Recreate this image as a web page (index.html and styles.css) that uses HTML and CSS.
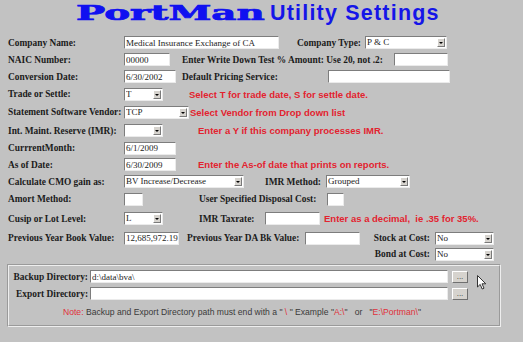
FILE: index.html
```html
<!DOCTYPE html>
<html lang="en">
<head>
    <meta charset="UTF-8">
    <title>PortMan Utility Settings</title>
    <link rel="stylesheet" href="styles.css">
</head>
<body>
    <div class="page">
        <h1 class="title">
            <span class="brand"><span class="brand-text">PortMan</span></span>
            <span class="title-rest">Utility Settings</span>
        </h1>

        <form class="settings">
            <div class="row">
                <label class="label">Company Name:</label>
                <input class="field company-name" value="Medical Insurance Exchange of CA">
                <label class="inline-label company-type-label">Company Type:</label>
                <span class="dropdown company-type"><select><option>P &amp; C</option></select></span>
            </div>
            <div class="row">
                <label class="label">NAIC Number:</label>
                <input class="field naic" value="00000">
                <label class="inline-label writedown-label">Enter Write Down Test % Amount: Use 20, not .2:</label>
                <input class="field writedown" value="">
            </div>
            <div class="row">
                <label class="label">Conversion Date:</label>
                <input class="field date" value="6/30/2002">
                <label class="inline-label pricing-label">Default Pricing Service:</label>
                <input class="field pricing" value="">
            </div>
            <div class="row row-18">
                <label class="label">Trade or Settle:</label>
                <span class="dropdown short"><select><option>T</option></select></span>
                <span class="hint hint-trade">Select T for trade date, S for settle date.</span>
            </div>
            <div class="row row-18">
                <label class="label">Statement Software Vendor:</label>
                <span class="dropdown vendor"><select><option>TCP</option></select></span>
                <span class="hint hint-vendor">Select Vendor from Drop down list</span>
            </div>
            <div class="row row-19">
                <label class="label">Int. Maint. Reserve (IMR):</label>
                <span class="dropdown short"><select><option></option></select></span>
                <span class="hint hint-imr">Enter a Y if this company processes IMR.</span>
            </div>
            <div class="row row-16">
                <label class="label">CurrrentMonth:</label>
                <input class="field date" value="6/1/2009">
            </div>
            <div class="row">
                <label class="label">As of Date:</label>
                <input class="field date" value="6/30/2009">
                <span class="hint hint-asof">Enter the As-of date that prints on reports.</span>
            </div>
            <div class="row">
                <label class="label">Calculate CMO gain as:</label>
                <span class="dropdown cmo"><select><option>BV Increase/Decrease</option></select></span>
                <label class="inline-label imr-method-label">IMR Method:</label>
                <span class="dropdown imr-method"><select><option>Grouped</option></select></span>
            </div>
            <div class="row row-18">
                <label class="label">Amort Method:</label>
                <input class="field tiny" value="">
                <label class="inline-label disposal-label">User Specified Disposal Cost:</label>
                <input class="field disposal" value="">
            </div>
            <div class="row row-21">
                <label class="label">Cusip or Lot Level:</label>
                <span class="dropdown short"><select><option>L</option></select></span>
                <label class="inline-label taxrate-label">IMR Taxrate:</label>
                <input class="field taxrate" value="">
                <span class="hint hint-taxrate">Enter as a decimal,&nbsp; ie .35 for 35%.</span>
            </div>
            <div class="row row-18">
                <label class="label">Previous Year Book Value:</label>
                <input class="field book-value" value="12,685,972.19">
                <label class="inline-label da-label">Previous Year DA Bk Value:</label>
                <input class="field da-value" value="">
                <label class="cost-label">Stock at Cost:</label>
                <span class="dropdown cost"><select><option>No</option></select></span>
            </div>
            <div class="row row-14 cost-row">
                <label class="cost-label">Bond at Cost:</label>
                <span class="dropdown cost"><select><option>No</option></select></span>
            </div>

            <div class="dir-box">
                <div class="dir-row">
                    <label class="dir-label">Backup Directory:</label>
                    <input class="field dir-field" value="d:\data\bva\">
                    <button type="button" class="browse">...</button>
                </div>
                <div class="dir-row">
                    <label class="dir-label">Export Directory:</label>
                    <input class="field dir-field" value="">
                    <button type="button" class="browse">...</button>
                </div>
                <p class="note"><span class="red">Note:</span> Backup and Export Directory path must end with a "<span class="red"> \ </span>" Example "<span class="red">A:\</span>"&nbsp;&nbsp; or &nbsp;&nbsp;"<span class="red">E:\Portman\</span>"</p>
            </div>
        </form>

        <!-- mouse pointer left on the screen -->
        <svg class="pointer" width="10" height="15" viewBox="0 0 10 15">
            <path d="M0.5 0.5 L0.5 12 L3.2 9.4 L5.2 14 L7 13.2 L5 8.8 L8.8 8.8 Z" fill="#fff" stroke="#333" stroke-width="1"/>
        </svg>
    </div>
</body>
</html>
```

FILE: styles.css
```css
body {
    margin: 0;
    background: #c2c2c2;
    font-family: "Liberation Serif", "Times New Roman", serif;
    color: #1b1b1b;
}

.page {
    position: relative;
    width: 523px;
    height: 342px;
    overflow: hidden;
}

/* Heading */
.title {
    display: flex;
    align-items: baseline;
    height: 34px;
    margin: 0;
    padding: 0 0 0 76px;
    box-sizing: border-box;
    font-size: 20px;
    line-height: 26px;
    color: #1515e8;
    font-weight: bold;
}

.brand {
    display: inline-block;
    width: 194px;
}

.brand-text {
    display: inline-block;
    font-family: "DejaVu Serif", serif;
    font-size: 20px;
    font-weight: bold;
    -webkit-text-stroke: 0.7px #1010f0;
    color: #1010f0;
    transform: scaleX(1.94);
    transform-origin: 0 0;
}

.title-rest {
    font-family: "Liberation Sans", Arial, sans-serif;
    font-size: 21.5px;
    letter-spacing: 1.2px;
}

/* Form rows */
.settings {
    margin: 0;
    padding-left: 8px;
}

.row {
    display: flex;
    align-items: center;
    height: 17px;
}

.row-14 { height: 14px; }
.row-16 { height: 16px; }
.row-18 { height: 18px; }
.row-19 { height: 19px; }
.row-21 { height: 21px; }

.label,
.inline-label,
.cost-label,
.dir-label {
    flex: none;
    font-size: 9.4px;
    font-weight: bold;
    white-space: nowrap;
}

.label {
    width: 116px;
}

.hint {
    flex: none;
    font-family: "Liberation Sans", Arial, sans-serif;
    font-size: 9.5px;
    font-weight: bold;
    color: #e2232f;
    white-space: nowrap;
}

.field {
    flex: none;
    box-sizing: border-box;
    height: 13px;
    margin: 0;
    padding: 0 0 0 1px;
    border: 1px solid;
    border-color: #7d7d7d #ebebeb #ebebeb #7d7d7d;
    border-radius: 0;
    background: #fff;
    font-family: "Liberation Serif", "Times New Roman", serif;
    font-size: 9px;
    color: #222;
    outline: none;
}

.dropdown {
    position: relative;
    flex: none;
    display: block;
    height: 13px;
}

.dropdown select {
    -webkit-appearance: none;
    appearance: none;
    display: block;
    box-sizing: border-box;
    width: 100%;
    height: 100%;
    margin: 0;
    padding: 0 0 0 1px;
    border: 1px solid;
    border-color: #7d7d7d #ebebeb #ebebeb #7d7d7d;
    border-radius: 0;
    background: #fff;
    font-family: "Liberation Serif", "Times New Roman", serif;
    font-size: 9px;
    line-height: 11px;
    color: #222;
    outline: none;
}

/* the little drop button on the right of each select */
.dropdown::after {
    content: "";
    position: absolute;
    top: 2px;
    right: 2px;
    bottom: 2px;
    width: 8px;
    box-sizing: border-box;
    background: #d6d3ce;
    border: 1px solid;
    border-color: #fff #7a7a7a #7a7a7a #fff;
}

.dropdown::before {
    content: "";
    position: absolute;
    z-index: 1;
    top: 6px;
    right: 4px;
    border-left: 2px solid transparent;
    border-right: 2px solid transparent;
    border-top: 2px solid #000;
}

/* widths and spacing per field */
.company-name { width: 155px; }
.company-type-label { width: 68px; margin-left: 18px; }
.company-type { width: 82px; }

.naic { width: 46px; }
.writedown-label { width: 212px; margin-left: 12px; }
.writedown { width: 54px; }

.date { width: 52px; }
.pricing-label { width: 146px; margin-left: 6px; }
.pricing { width: 122px; }

.short { width: 39px; }
.vendor { width: 65px; }
.hint-trade { margin-left: 26px; }
.hint-vendor { margin-left: 1px; }
.hint-imr { margin-left: 35px; }
.hint-asof { margin-left: 22px; }

.cmo { width: 120px; }
.imr-method-label { width: 61px; margin-left: 21px; }
.imr-method { width: 84px; }

.tiny { width: 19px; }
.disposal-label { width: 128px; margin-left: 56px; }
.disposal { width: 17px; }

.taxrate-label { width: 66px; margin-left: 36px; }
.taxrate { width: 55px; }
.hint-taxrate { margin-left: 4px; }

.book-value { width: 55px; }
.da-label { width: 118px; margin-left: 8px; }
.da-value { width: 55px; }

.cost-label {
    width: 63px;
    margin-left: 12px;
    padding-right: 5px;
    box-sizing: border-box;
    text-align: right;
}

.cost { width: 59px; }

.cost-row {
    padding-left: 352px;
}

/* Directory box */
.dir-box {
    box-sizing: border-box;
    width: 494px;
    height: 63px;
    margin: 3px 0 0 -1px;
    padding-top: 2px;
    border: 2px groove #eeeeee;
}

.dir-row {
    display: flex;
    align-items: center;
    height: 17px;
}

.dir-label {
    width: 79px;
    text-align: right;
}

.dir-field {
    width: 358px;
    margin-left: 2px;
}

.browse {
    flex: none;
    box-sizing: border-box;
    width: 16px;
    height: 12px;
    margin-left: 4px;
    padding: 0;
    border: 1px solid;
    border-color: #fff #707070 #707070 #fff;
    background: #d6d3ce;
    font-family: "Liberation Sans", Arial, sans-serif;
    font-size: 8px;
    line-height: 4px;
    color: #333;
}

.note {
    margin: 0;
    height: 20px;
    padding-left: 54px;
    line-height: 20px;
    font-family: "Liberation Sans", Arial, sans-serif;
    font-size: 8.6px;
    color: #3a3a3a;
    white-space: nowrap;
}

.red {
    color: #e0303a;
}

.pointer {
    position: absolute;
    left: 477px;
    top: 275px;
}
```
